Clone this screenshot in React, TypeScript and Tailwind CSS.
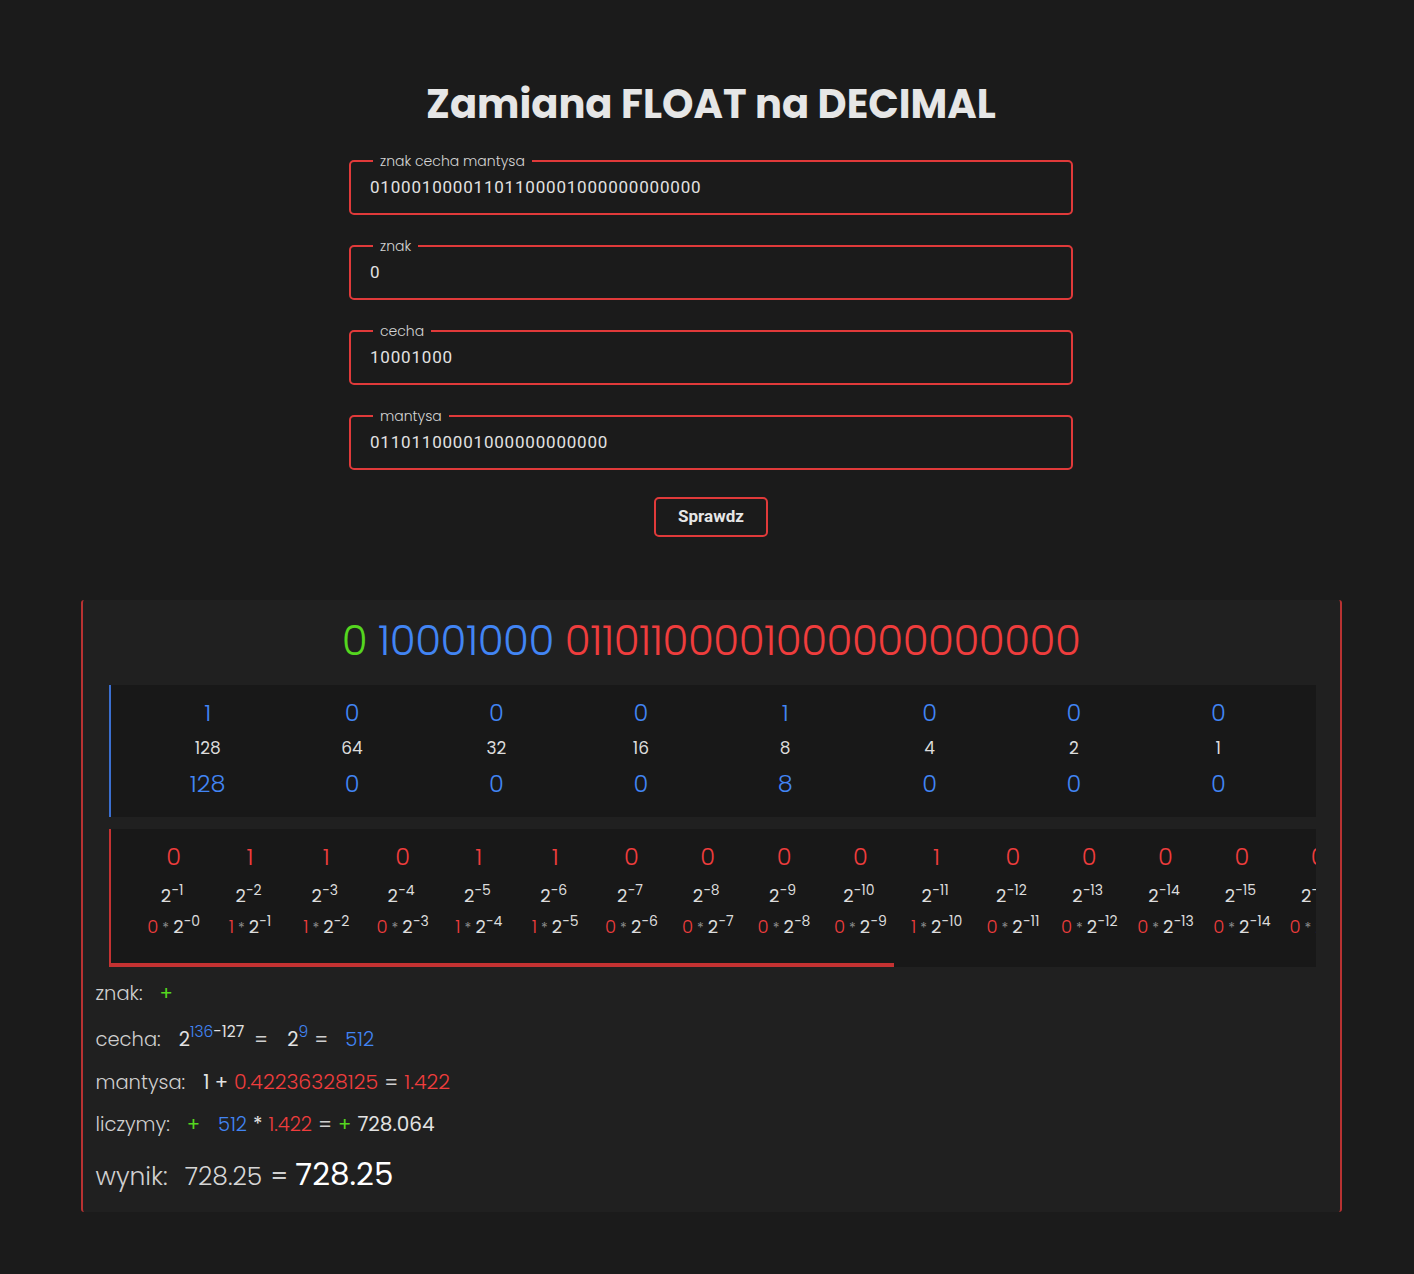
import { useState } from 'react';

const RED = 'text-[#ef3d3d]';
const BLUE = 'text-[#4285f4]';
const GREEN = 'text-[#55d61f]';

function Field({ label, value }: { label: string; value: string }) {
  return (
    <fieldset className="w-[724px] border-2 border-[#e03a3a] rounded-[5px] px-[19px] pb-[10px]">
      <legend className="ml-[3px] px-[7px] text-[14px] leading-[20px] font-light text-[#d4d4d4]">{label}</legend>
      <input
        readOnly
        value={value}
        className="w-full h-[32px] bg-transparent outline-none text-[17px] text-[#e2e2e2] font-['Roboto',sans-serif] tracking-[0.8px]"
      />
    </fieldset>
  );
}

function Pow({ exp }: { exp: string }) {
  return (
    <span className="text-[18px] text-[#dcdcdc]">
      2<sup className="text-[14px] relative -top-[7px]">{exp}</sup>
    </span>
  );
}

export default function App() {
  const [bits] = useState('01000100001101100001000000000000');
  const znak = bits.slice(0, 1);
  const cecha = bits.slice(1, 9);
  const mantysa = bits.slice(9);

  // wagi cechy
  const weights = [128, 64, 32, 16, 8, 4, 2, 1];

  return (
    <div className="min-h-screen bg-[#1b1b1b] text-[#e2e2e2] font-['Poppins','Inter',sans-serif] pt-[80px] pb-[62px] pl-[8px] flex flex-col items-center">
      <h1 className="text-[40px] leading-[48px] font-bold text-[#e6e6e6]">Zamiana FLOAT na DECIMAL</h1>

      {/* formularz */}
      <div className="mt-[23px] flex flex-col items-center gap-[21px]">
        <Field label="znak cecha mantysa" value={bits} />
        <Field label="znak" value={znak} />
        <Field label="cecha" value={cecha} />
        <Field label="mantysa" value={mantysa} />
        <button className="mt-[6px] w-[114px] h-[40px] border-2 border-[#e03a3a] rounded-[5px] text-[17px] font-bold font-['Roboto',sans-serif] text-[#e6e6e6]">
          Sprawdz
        </button>
      </div>

      {/* wynik */}
      <div className="mt-[63px] w-[1261px] bg-[#202020] border-x-2 border-[#b83232] rounded-[3px] px-[13px] pt-[11px] pb-[17px]">
        <h2 className="text-center text-[42px] leading-[60px] font-light tracking-[-0.5px]">
          <span className={GREEN}>{znak}</span> <span className={BLUE}>{cecha}</span>{' '}
          <span className={RED}>{mantysa}</span>
        </h2>

        {/* cecha */}
        <div className="mt-[14px] ml-[13px] mr-[11px] bg-[#181818] border-l-2 border-[#3b6fd0] px-[25px] pt-[10px] pb-[15px] grid grid-cols-8">
          {weights.map((w, i) => (
            <div key={i} className="flex flex-col items-center">
              <span className={`${BLUE} text-[24px] leading-[36px] font-light`}>{cecha[i]}</span>
              <span className="text-[17px] leading-[35px] text-[#dcdcdc]">{w}</span>
              <span className={`${BLUE} text-[24px] leading-[36px] font-light`}>{Number(cecha[i]) * w}</span>
            </div>
          ))}
        </div>

        {/* mantysa */}
        <div className="mt-[12px] ml-[13px] mr-[11px] bg-[#181818] border-l-2 border-[#c53232] overflow-hidden">
          <div className="flex px-[25px] pt-[10px] pb-[18px]">
            {mantysa.split('').map((b, i) => (
              <div key={i} className="w-[76.3px] shrink-0 flex flex-col items-center">
                <span className={`${RED} text-[24px] leading-[36px] font-light`}>{b}</span>
                <span className="h-[30px] leading-[42px] -ml-[3px]">
                  <Pow exp={`−${i + 1}`} />
                </span>
                <span className="h-[40px] leading-[43px] whitespace-nowrap">
                  <span className={`${RED} text-[18px] font-light`}>{b}</span>
                  <span className="text-[14px] text-[#8a8a8a] mx-[4px]">*</span>
                  <Pow exp={`−${i}`} />
                </span>
              </div>
            ))}
          </div>
          <div className="h-[4px] w-[65%] bg-[#c53232]" />
        </div>

        {/* podsumowanie */}
        <div className="mt-[12px] flex flex-col text-[19.5px] font-light text-[#cfcfcf]">
          <div className="h-[30px] leading-[30px]">
            <span>znak:</span>
            <span className={`${GREEN} ml-[17px] font-normal`}>+</span>
          </div>
          <div className="mt-[14px] h-[34px] leading-[34px] flex items-baseline">
            <span>cecha:</span>
            <span className="ml-[18px] font-normal text-[#e2e2e2]">
              2<sup className="text-[15.5px] relative -top-[9px]"><span className={`${BLUE} font-light`}>136</span>-127</sup>
            </span>
            <span className="ml-[10px] font-normal">=</span>
            <span className="ml-[19px] font-normal text-[#e2e2e2]">
              2<sup className={`text-[15.5px] relative -top-[9px] font-light ${BLUE}`}>9</sup>
            </span>
            <span className="ml-[6px] font-normal">=</span>
            <span className={`ml-[17px] ${BLUE}`}>512</span>
          </div>
          <div className="mt-[8px] h-[34px] leading-[34px]">
            <span>mantysa:</span>
            <span className="ml-[18px] font-normal text-[#e2e2e2]">1 +</span>
            <span className={`ml-[6px] ${RED} text-[20.5px]`}>0.42236328125</span>
            <span className="ml-[6px] font-normal">=</span>
            <span className={`ml-[6px] ${RED} text-[20.5px]`}>1.422</span>
          </div>
          <div className="mt-[8px] h-[34px] leading-[34px]">
            <span>liczymy:</span>
            <span className={`${GREEN} ml-[17px] font-normal`}>+</span>
            <span className={`${BLUE} ml-[18px]`}>512</span>
            <span className="ml-[6px] font-normal text-[#e2e2e2]">*</span>
            <span className={`${RED} ml-[6px]`}>1.422</span>
            <span className="ml-[6px] font-normal">=</span>
            <span className={`${GREEN} ml-[6px] font-normal`}>+</span>
            <span className="ml-[6px] font-normal text-[#e2e2e2] text-[20px]">728.064</span>
          </div>
          <div className="mt-[10px] h-[44px] flex items-baseline">
            <span className="text-[25px]">wynik:</span>
            <span className="ml-[17px] text-[25px] text-[#d6d6d6]">728.25</span>
            <span className="ml-[8px] text-[25px] font-normal">=</span>
            <span className="ml-[7px] text-[31px] font-normal text-white">728.25</span>
          </div>
        </div>
      </div>
    </div>
  );
}
